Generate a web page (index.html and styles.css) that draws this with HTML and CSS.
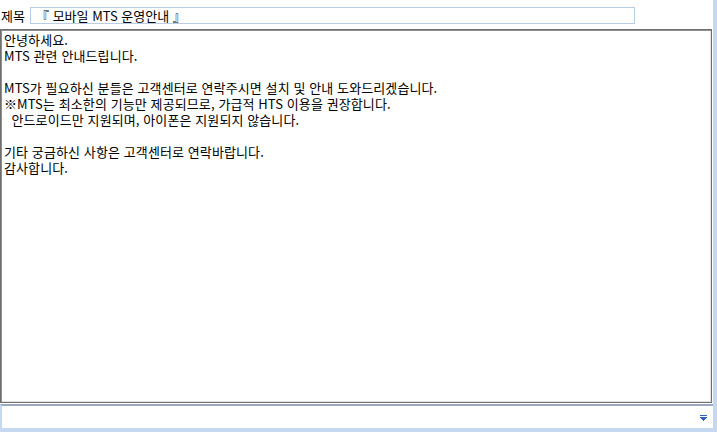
FILE: index.html
```html
<!DOCTYPE html>
<html lang="ko">
<head>
<meta charset="utf-8">
<link rel="stylesheet" href="styles.css">
</head>
<body>
<div class="window">
  <div class="pane">
    <div class="header">
      <span class="label">제목</span>
      <div class="title-input">『 모바일 MTS 운영안내 』</div>
    </div>
    <div class="body-text">안녕하세요.
MTS 관련 안내드립니다.

MTS가 필요하신 분들은 고객센터로 연락주시면 설치 및 안내 도와드리겠습니다.
※MTS는 최소한의 기능만 제공되므로, 가급적 HTS 이용을 권장합니다.
  안드로이드만 지원되며, 아이폰은 지원되지 않습니다.

기타 궁금하신 사항은 고객센터로 연락바랍니다.
감사합니다.</div>
    <div class="combo">
      <svg class="arrow" width="7" height="6" viewBox="0 0 7 6" shape-rendering="crispEdges"><rect x="0" y="0" width="7" height="1" fill="#2a62c0"/><rect x="0" y="2" width="7" height="1" fill="#2a62c0"/><rect x="1" y="3" width="5" height="1" fill="#2a62c0"/><rect x="2" y="4" width="3" height="1" fill="#2a62c0"/><rect x="3" y="5" width="1" height="1" fill="#2a62c0"/></svg>
    </div>
  </div>
</div>
</body>
</html>
```

FILE: styles.css
```css
html, body {
  margin: 0;
  padding: 0;
  background: #ffffff;
}
body {
  width: 717px;
  height: 432px;
  overflow: hidden;
  font-family: "Noto Sans CJK KR", "Noto Sans", sans-serif;
  font-size: 13px;
  color: #000;
}
.window {
  width: 717px;
  height: 432px;
  box-sizing: border-box;
  padding: 0 4px 4px 0;
  background: #c6d8ef;
  display: flex;
}
.pane {
  flex: 1;
  background: #ffffff;
  display: flex;
  flex-direction: column;
}
.header {
  height: 29px;
  display: flex;
  align-items: flex-start;
  padding-top: 7px;
  box-sizing: border-box;
}
.label {
  width: 30px;
  padding-left: 1px;
  box-sizing: border-box;
  line-height: 17px;
}
.title-input {
  width: 605px;
  height: 17px;
  box-sizing: border-box;
  border: 1px solid #b9cde5;
  padding-left: 5px;
  line-height: 15px;
  white-space: pre;
}
.body-text {
  width: 712px;
  height: 374px;
  box-sizing: border-box;
  border: 1px solid #6f6f6f;
  box-shadow: inset 1px 1px 0 #8e8e8e, inset -1px -1px 0 #e3e3e3;
  padding: 2px 3px;
  line-height: 16px;
  white-space: pre;
  letter-spacing: 0.1px;
}
.combo {
  flex: 1;
  border-top: 2px solid #9aa9c1;
  border-left: 2px solid #c6d8ef;
  margin-top: 1px;
  display: flex;
  align-items: center;
  justify-content: flex-end;
  padding-right: 6px;
}
.arrow {
  display: block;
  margin-top: 1px;
}
```
